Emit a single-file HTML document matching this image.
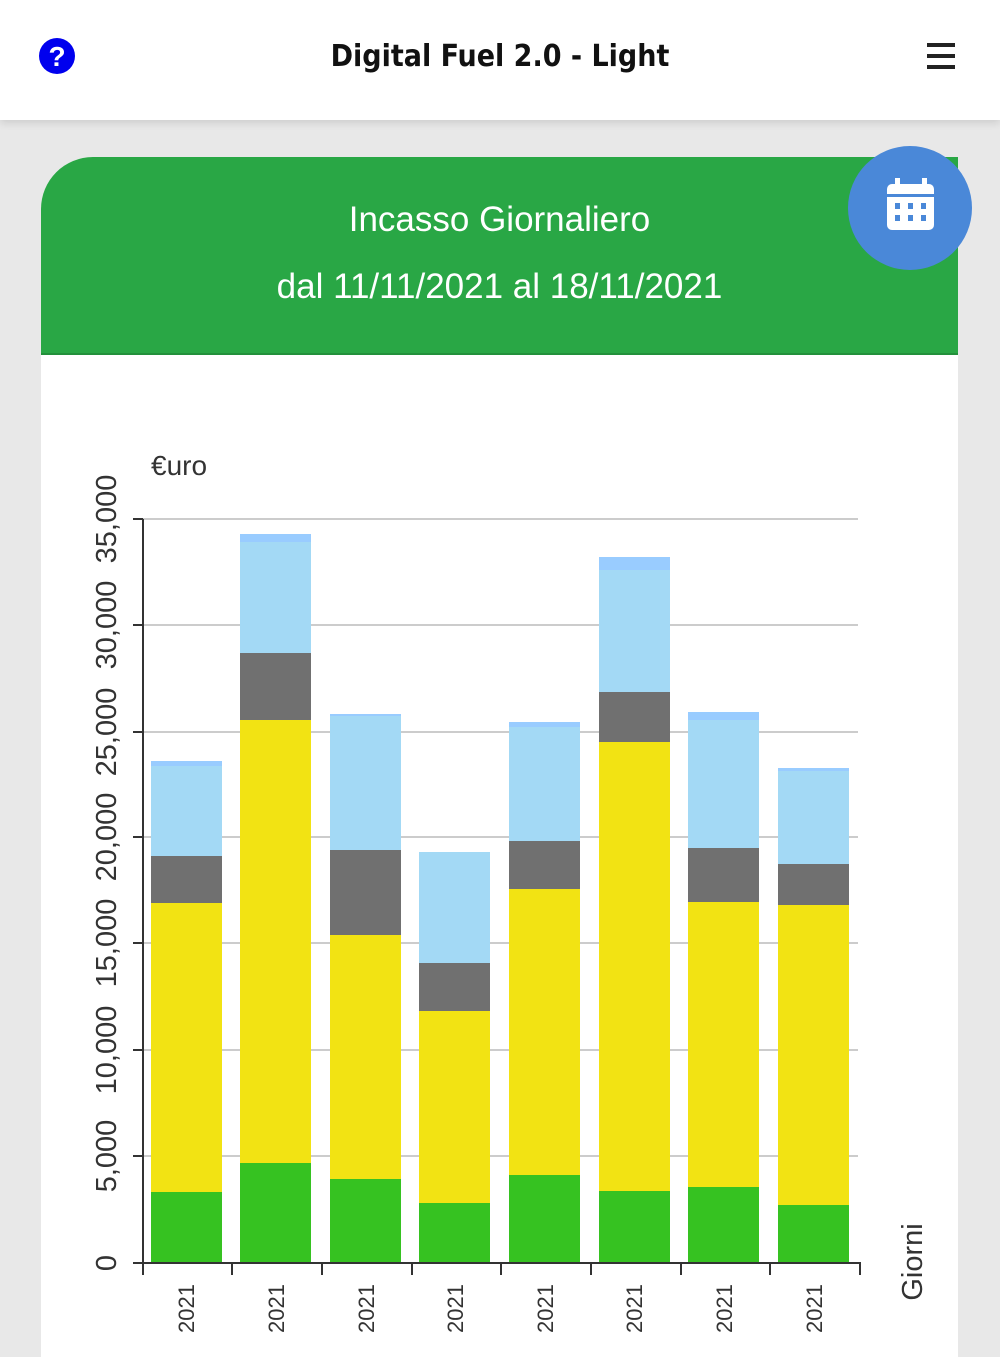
<!DOCTYPE html>
<html><head><meta charset="utf-8"><style>
body{margin:0;width:1000px;height:1334px;background:#e8e8e8;overflow:hidden;font-family:"Liberation Sans",sans-serif;position:relative}
.hdr{position:absolute;left:0;top:0;width:1000px;height:120px;background:#fff;box-shadow:0 3px 8px rgba(0,0,0,.12)}
.title{position:absolute;left:0;width:1000px;top:39px;text-align:center;font-family:"DejaVu Sans Condensed","Liberation Sans",sans-serif;font-weight:bold;font-size:30px;color:#111}
.card{position:absolute;left:41px;top:157px;width:917px;height:1200px;background:#fff;border-top-left-radius:52px;overflow:hidden}
.green{height:196px;background:#29a745;border-bottom:2px solid #23903b;color:#fff;text-align:center;font-size:35px}
.cal{position:absolute;left:848px;top:146px;width:124px;height:124px;border-radius:50%;background:#4a88d8}
</style></head><body>
<div class="hdr">
<svg style="position:absolute;left:38px;top:37px" width="38" height="38" viewBox="0 0 38 38"><ellipse cx="19" cy="19" rx="18" ry="18" fill="#0000ee"/><text x="19" y="29" text-anchor="middle" font-size="28" font-weight="bold" fill="#fff" font-family="Liberation Sans">?</text></svg>
<div class="title">Digital Fuel 2.0 - Light</div>
<svg style="position:absolute;left:927px;top:43px" width="28" height="26"><rect x="0" y="0" width="28" height="4" fill="#222"/><rect x="0" y="11" width="28" height="4" fill="#222"/><rect x="0" y="22" width="28" height="4" fill="#222"/></svg>
</div>
<div class="card"><div class="green"><div style="padding-top:43px">Incasso Giornaliero</div><div style="padding-top:27px">dal 11/11/2021 al 18/11/2021</div></div></div>
<div class="cal"><svg style="position:absolute;left:39px;top:32px" width="48" height="52" viewBox="0 0 48 52"><rect x="8" y="0" width="5" height="10" fill="#fff"/><rect x="35" y="0" width="5" height="10" fill="#fff"/><rect x="0" y="6" width="47" height="46" rx="5" fill="#fff"/><rect x="0" y="16" width="47" height="3" fill="#4a88d8"/><g fill="#4a88d8"><rect x="8" y="25" width="5" height="6"/><rect x="21" y="25" width="5" height="6"/><rect x="34" y="25" width="5" height="6"/><rect x="8" y="37" width="5" height="6"/><rect x="21" y="37" width="5" height="6"/><rect x="34" y="37" width="5" height="6"/></g></svg></div>
<svg style="position:absolute;left:0;top:0" width="1000" height="1334" font-family="Liberation Sans">
<text x="151" y="475" font-size="28" fill="#333">€uro</text>
<g stroke="#ccc" stroke-width="2"><line x1="143" y1="519" x2="858" y2="519"/><line x1="143" y1="625" x2="858" y2="625"/><line x1="143" y1="732" x2="858" y2="732"/><line x1="143" y1="837" x2="858" y2="837"/><line x1="143" y1="943" x2="858" y2="943"/><line x1="143" y1="1050" x2="858" y2="1050"/><line x1="143" y1="1156" x2="858" y2="1156"/></g>
<g id="bars"></g>
<g stroke="#333" stroke-width="2"><line x1="143" y1="519" x2="143" y2="1264"/><line x1="143" y1="1263" x2="861" y2="1263"/>
<line x1="133" y1="519" x2="143" y2="519"/><line x1="133" y1="625" x2="143" y2="625"/><line x1="133" y1="732" x2="143" y2="732"/><line x1="133" y1="837" x2="143" y2="837"/><line x1="133" y1="943" x2="143" y2="943"/><line x1="133" y1="1050" x2="143" y2="1050"/><line x1="133" y1="1156" x2="143" y2="1156"/><line x1="133" y1="1263" x2="143" y2="1263"/>
<line x1="232" y1="1263" x2="232" y2="1275"/><line x1="322" y1="1263" x2="322" y2="1275"/><line x1="412" y1="1263" x2="412" y2="1275"/><line x1="501" y1="1263" x2="501" y2="1275"/><line x1="591" y1="1263" x2="591" y2="1275"/><line x1="681" y1="1263" x2="681" y2="1275"/><line x1="770" y1="1263" x2="770" y2="1275"/><line x1="860" y1="1263" x2="860" y2="1275"/><line x1="143" y1="1263" x2="143" y2="1275"/></g>
<g font-size="29" fill="#333" text-anchor="middle">
<text transform="translate(116,1263) rotate(-90)">0</text>
<text transform="translate(116,1156) rotate(-90)">5,000</text>
<text transform="translate(116,1050) rotate(-90)">10,000</text>
<text transform="translate(116,943) rotate(-90)">15,000</text>
<text transform="translate(116,837) rotate(-90)">20,000</text>
<text transform="translate(116,732) rotate(-90)">25,000</text>
<text transform="translate(116,625) rotate(-90)">30,000</text>
<text transform="translate(116,519) rotate(-90)">35,000</text>
<text transform="translate(922,1262) rotate(-90)">Giorni</text>
</g>
<g font-size="22" fill="#333" text-anchor="end">
<text transform="translate(194,1284) rotate(-90)">2021</text>
<text transform="translate(284,1284) rotate(-90)">2021</text>
<text transform="translate(374,1284) rotate(-90)">2021</text>
<text transform="translate(463,1284) rotate(-90)">2021</text>
<text transform="translate(553,1284) rotate(-90)">2021</text>
<text transform="translate(642,1284) rotate(-90)">2021</text>
<text transform="translate(732,1284) rotate(-90)">2021</text>
<text transform="translate(822,1284) rotate(-90)">2021</text>
</g>
</svg>
<script>
var d=[[151,1192,903,856,766,761],[240,1163,720,653,542,534],[330,1179,935,850,716,714],[419,1203,1011,963,852,852],[509,1175,889,841,727,722],[599,1191,742,692,570,557],[688,1187,902,848,720,712],[778,1205,905,864,771,768]];
var c=["#36c221","#f2e313","#707070","#a3d9f5","#99ccff"],s="";
d.forEach(function(b){var prev=1263;for(var i=0;i<5;i++){var t=b[i+1];if(prev-t>0)s+='<rect x="'+b[0]+'" y="'+t+'" width="71" height="'+(prev-t)+'" fill="'+c[i]+'"/>';prev=t;}});
document.getElementById("bars").innerHTML=s;
</script>
</body></html>
